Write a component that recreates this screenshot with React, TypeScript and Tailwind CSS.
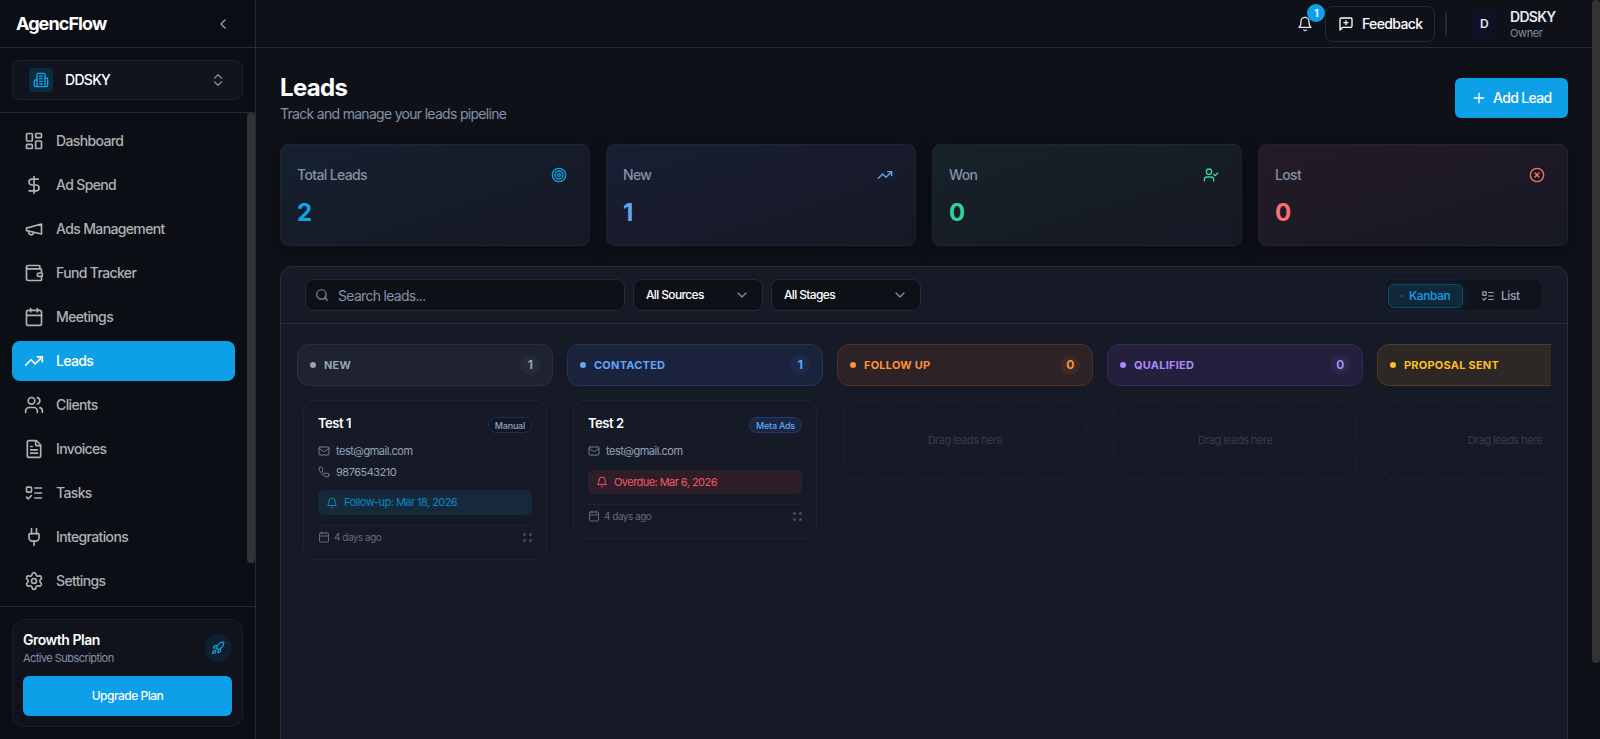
import type { ReactNode } from "react";
import clsx from "clsx";
import {
  Calendar, ChevronDown, ChevronLeft, ChevronsUpDown, CircleX, DollarSign, FileText, LayoutDashboard,
  Mail, Plug, Plus, Rocket, Search, Settings, Target, TrendingUp, UserCheck, Users, Wallet,
} from "lucide-react";

type IconProps = { size?: number; className?: string };

function Svg({ size = 24, className, children }: IconProps & { children: ReactNode }) {
  return (
    <svg width={size} height={size} viewBox="0 0 24 24" fill="none" stroke="currentColor" strokeWidth="2" strokeLinecap="round" strokeLinejoin="round" className={clsx("shrink-0", className)}>
      {children}
    </svg>
  );
}

const Megaphone = (props: IconProps) => (
  <Svg {...props}>
    <path d="m3 11 18-5v12L3 14v-3z" />
    <path d="M11.6 16.8a3 3 0 1 1-5.8-1.6" />
  </Svg>
);

const ListTodo = (props: IconProps) => (
  <Svg {...props}>
    <rect x="3" y="5" width="6" height="6" rx="1" />
    <path d="m3 17 2 2 4-4" />
    <path d="M13 6h8M13 12h8M13 18h8" />
  </Svg>
);

const Bell = (props: IconProps) => (
  <Svg {...props}>
    <path d="M6 8a6 6 0 0 1 12 0c0 7 3 9 3 9H3s3-2 3-9" />
    <path d="M10.3 21a1.94 1.94 0 0 0 3.4 0" />
  </Svg>
);

const Building = (props: IconProps) => (
  <Svg {...props}>
    <path d="M6 22V4a2 2 0 0 1 2-2h8a2 2 0 0 1 2 2v18Z" />
    <path d="M6 12H4a2 2 0 0 0-2 2v6a2 2 0 0 0 2 2h2" />
    <path d="M18 9h2a2 2 0 0 1 2 2v9a2 2 0 0 1-2 2h-2" />
    <path d="M10 6h4M10 10h4M10 14h4M10 18h4" />
  </Svg>
);

const MessagePlus = (props: IconProps) => (
  <Svg {...props}>
    <path d="M21 15a2 2 0 0 1-2 2H7l-4 4V5a2 2 0 0 1 2-2h14a2 2 0 0 1 2 2z" />
    <path d="M12 7v6M9 10h6" />
  </Svg>
);

const Phone = (props: IconProps) => (
  <Svg {...props}>
    <path d="M22 16.92v3a2 2 0 0 1-2.18 2 19.79 19.79 0 0 1-8.63-3.07 19.5 19.5 0 0 1-6-6 19.79 19.79 0 0 1-3.07-8.67A2 2 0 0 1 4.11 2h3a2 2 0 0 1 2 1.72 12.84 12.84 0 0 0 .7 2.81 2 2 0 0 1-.45 2.11L8.09 9.91a16 16 0 0 0 6 6l1.27-1.27a2 2 0 0 1 2.11-.45 12.84 12.84 0 0 0 2.81.7A2 2 0 0 1 22 16.92z" />
  </Svg>
);

const navItems = [
  { label: "Dashboard", icon: LayoutDashboard },
  { label: "Ad Spend", icon: DollarSign },
  { label: "Ads Management", icon: Megaphone },
  { label: "Fund Tracker", icon: Wallet },
  { label: "Meetings", icon: Calendar },
  { label: "Leads", icon: TrendingUp, active: true },
  { label: "Clients", icon: Users },
  { label: "Invoices", icon: FileText },
  { label: "Tasks", icon: ListTodo },
  { label: "Integrations", icon: Plug },
  { label: "Settings", icon: Settings },
];

const stats = [
  { label: "Total Leads", value: 2, icon: Target, color: "text-[#0ea5e9]", bg: "from-[#15202f]" },
  { label: "New", value: 1, icon: TrendingUp, color: "text-[#60a5fa]", bg: "from-[#181e33]" },
  { label: "Won", value: 0, icon: UserCheck, color: "text-[#34d399]", bg: "from-[#16222a]" },
  { label: "Lost", value: 0, icon: CircleX, color: "text-[#f87171]", bg: "from-[#241b27]" },
];

type Lead = { name: string; source: string; badge: string; email: string; phone?: string; due: string; dueClass: string };

const columns: { title: string; count?: number; head: string; dot: string; pill?: string; lead?: Lead }[] = [
  {
    title: "NEW", count: 1, head: "bg-[#1e232f] border-[#2b303d] text-[#94a3b8]", dot: "bg-[#94a3b8]", pill: "bg-[#252a37]",
    lead: { name: "Test 1", source: "Manual", badge: "bg-[#0f172a] border-[#232e3f] text-[#94a3b8]", email: "test@gmail.com", phone: "9876543210", due: "Follow-up: Mar 18, 2026", dueClass: "mt-2.5 h-[25px] bg-[#15293b] text-[#0d86c2]" },
  },
  {
    title: "CONTACTED", count: 1, head: "bg-[#1a233b] border-[#1e3660] text-[#60a5fa]", dot: "bg-[#60a5fa]", pill: "bg-[#1c2b4c]",
    lead: { name: "Test 2", source: "Meta Ads", badge: "bg-[#1a2540] border-[#1f3a6b] text-[#60a5fa]", email: "test@gmail.com", due: "Overdue: Mar 6, 2026", dueClass: "mt-[11px] h-6 bg-[#2d1e29] text-[#f8565b]" },
  },
  { title: "FOLLOW UP", count: 0, head: "bg-[#2d2226] border-[#553022] text-[#fb923c]", dot: "bg-[#fb923c]", pill: "bg-[#3d2926]" },
  { title: "QUALIFIED", count: 0, head: "bg-[#241f3c] border-[#38295f] text-[#a78bfa]", dot: "bg-[#a78bfa]", pill: "bg-[#2d254c]" },
  { title: "PROPOSAL SENT", head: "bg-[#2d2725] border-[#553c1c] text-[#fbbf24]", dot: "bg-[#fbbf24]" },
];

function Sidebar() {
  return (
    <aside className="flex w-64 shrink-0 flex-col border-r border-[#222c3b] bg-[#0b0e14]">
      <div className="flex h-12 shrink-0 items-center justify-between border-b border-[#222c3b] pl-4 pr-6">
        <span className="text-lg font-bold tracking-[-0.05em] text-white">AgencFlow</span>
        <ChevronLeft size={16} className="text-[#94a3b8]" />
      </div>
      <div className="shrink-0 border-b border-[#222c3b] p-3">
        <div className="flex h-10 items-center rounded-lg border border-[#1c1f2e] bg-[#11131d] px-4">
          <div className="flex size-6 items-center justify-center rounded bg-[#0d2c40] text-[#0ea5e9]">
            <Building size={16} />
          </div>
          <span className="ml-3 flex-1 text-sm font-medium tracking-[-0.05em] text-white">DDSKY</span>
          <ChevronsUpDown size={16} className="text-[#8a8d94]" />
        </div>
      </div>
      <div className="flex min-h-0 flex-1">
        <nav className="flex flex-1 flex-col gap-1 px-3 py-2">
          {navItems.map(({ label, icon: Icon, active }) => (
            <a key={label} className={clsx("flex h-10 shrink-0 items-center gap-3 rounded-lg px-3 text-sm font-medium", active ? "bg-[#0ea0e6] text-white" : "text-[#b0b2b5]")}>
              <Icon size={20} />
              {label}
            </a>
          ))}
        </nav>
        <div className="w-2 shrink-0">
          <div className="h-[450px] rounded-full bg-[#333333]" />
        </div>
      </div>
      <div className="shrink-0 border-t border-[#222c3b] p-3">
        <div className="flex h-[108px] flex-col justify-between rounded-xl border border-[#1a1d2a] bg-[#10131b] p-2.5">
          <div className="flex items-center justify-between">
            <div>
              <p className="text-sm font-semibold leading-5 tracking-[-0.035em] text-white">Growth Plan</p>
              <p className="text-[11px] leading-4 tracking-[-0.05em] text-[#8391a7]">Active Subscription</p>
            </div>
            <div className="flex size-7 items-center justify-center rounded-full bg-[#0e1f2e] text-[#0ea5e9]">
              <Rocket size={14} />
            </div>
          </div>
          <button className="h-10 rounded-md bg-[#0ea0e6] text-xs font-medium tracking-[-0.042em] text-white">Upgrade Plan</button>
        </div>
      </div>
    </aside>
  );
}

function Header() {
  return (
    <header className="flex h-12 shrink-0 items-center justify-end border-b border-[#222a36] bg-[#0e1118] pr-7">
      <div className="relative mr-3">
        <Bell size={16} className="text-[#e5e7eb]" />
        <span className="absolute -top-3 left-2.5 flex size-[18px] items-center justify-center rounded-full bg-[#0ea0e6] pt-px text-[10px] font-bold text-white">1</span>
      </div>
      <button className="flex h-9 w-[110px] items-center gap-2 rounded-lg border border-[#222a36] pl-3 text-sm font-medium text-white">
        <MessagePlus size={16} />
        Feedback
      </button>
      <div className="ml-2.5 h-6 w-0.5 bg-[#222835]" />
      <div className="ml-[23px] flex size-7 items-center justify-center rounded-md bg-[#0e1224] text-xs font-semibold text-[#e5e7eb]">D</div>
      <div className="ml-3 w-[54px] pt-0.5">
        <p className="text-sm font-semibold leading-4 tracking-[-0.05em] text-[#e8eaed]">DDSKY</p>
        <p className="text-[11px] leading-4 tracking-[-0.035em] text-[#7f8ca1]">Owner</p>
      </div>
    </header>
  );
}

function LeadCard({ lead }: { lead: Lead }) {
  return (
    <div className="mx-1.5 rounded-xl border border-[#1f2331] px-3.5 pt-3.5 pb-3.5">
      <div className="flex h-7 items-start justify-between">
        <h3 className="text-[13px] font-semibold leading-4 tracking-[-0.035em] text-white">{lead.name}</h3>
        <span className={clsx("mt-0.5 flex h-4 items-center rounded-full border px-1.5 pt-px text-[9px] font-medium tracking-[-0.025em]", lead.badge)}>{lead.source}</span>
      </div>
      <div className="flex flex-col gap-[5px] text-[11px] leading-4 tracking-[-0.045em] text-[#94a3b8]">
        <div className="flex items-center gap-1.5"><Mail size={12} className="text-[#717d90]" />{lead.email}</div>
        {lead.phone && <div className="flex items-center gap-1.5"><Phone size={12} className="text-[#717d90]" />{lead.phone}</div>}
      </div>
      <div className={clsx("flex items-center gap-1.5 rounded-md px-2 text-[11px] tracking-[-0.05em]", lead.dueClass)}>
        <Bell size={12} />
        {lead.due}
      </div>
      <div className="mt-2.5 flex items-center justify-between border-t border-[#1f2431] pt-[3px] text-[10px] leading-4 tracking-[-0.05em] text-[#606b7d]">
        <span className="flex items-center gap-1"><Calendar size={12} />4 days ago</span>
        <span className="grid grid-cols-2 gap-[3px]">
          {[0, 1, 2, 3].map((i) => <i key={i} className="size-[3px] rounded-full bg-[#454c5a]" />)}
        </span>
      </div>
    </div>
  );
}

export default function App() {
  return (
    <div className="flex h-[739px] overflow-hidden bg-[#0e1118] font-['Inter',sans-serif] tracking-[-0.04em]">
      <Sidebar />
      <div className="flex min-w-0 flex-1 flex-col">
        <Header />
        <main className="flex min-h-0 flex-1 flex-col px-6 pt-6">
          <div className="flex h-[72px] shrink-0 items-start justify-between">
            <div>
              <h1 className="text-2xl font-bold leading-8 text-white">Leads</h1>
              <p className="text-sm leading-5 tracking-[-0.05em] text-[#8492a8]">Track and manage your leads pipeline</p>
            </div>
            <button className="mt-1.5 flex h-10 w-[113px] items-center gap-1.5 rounded-md bg-[#0ea0e6] pl-4 text-sm font-medium text-white">
              <Plus size={16} />
              Add Lead
            </button>
          </div>

          <div className="grid shrink-0 grid-cols-4 gap-4">
            {stats.map(({ label, value, icon: Icon, color, bg }) => (
              <div key={label} className={clsx("h-[102px] rounded-lg border border-[#20242f] bg-linear-to-br to-[#161824] px-4 pt-5 shadow-[0_4px_20px_rgba(0,0,0,0.35)]", bg)}>
                <div className="flex items-center justify-between pr-1.5">
                  <span className="text-sm font-medium leading-5 text-[#8391a6]">{label}</span>
                  <Icon size={16} className={color} />
                </div>
                <p className={clsx("mt-3 text-2xl font-bold leading-8", color)}>{value}</p>
              </div>
            ))}
          </div>

          <section className="mt-5 h-[600px] shrink-0 rounded-t-xl border border-[#262c38] bg-[#161926]">
            <div className="flex h-[57px] items-center gap-2 border-b border-[#262e3b] px-6">
              <div className="flex h-8 w-80 items-center gap-[9px] rounded-lg border border-[#232a36] bg-[#0d1017] pl-[9px] text-sm tracking-[-0.05em] text-[#8492a8]">
                <Search size={14} />
                <span className="pt-0.5">Search leads...</span>
              </div>
              <button className="flex h-8 w-[130px] items-center justify-between rounded-lg border border-[#232a36] bg-[#0d1017] px-3 text-xs font-medium text-white">
                All Sources
                <ChevronDown size={16} className="text-[#888b92]" />
              </button>
              <button className="flex h-8 w-[150px] items-center justify-between rounded-lg border border-[#232a36] bg-[#0d1017] px-3 text-xs font-medium text-white">
                All Stages
                <ChevronDown size={16} className="text-[#888b92]" />
              </button>
              <div className="ml-auto flex h-8 w-[159px] items-center rounded-lg border border-[#1a1d26] bg-[#10131b] px-[3px] pt-0.5 text-xs font-medium tracking-[-0.035em]">
                <button className="flex h-6 w-[75px] items-center rounded-md border border-[#0f4a69] bg-[#10283a] pl-3 text-[#0ea0e6] shadow-[0_0_10px_rgba(14,165,233,0.15)]">
                  <i className="mr-1.5 size-0.5 rounded-full bg-[#0c6b99]" />
                  Kanban
                </button>
                <button className="flex h-6 flex-1 items-center gap-1.5 pl-[18px] text-[#94a3b8]">
                  <ListTodo size={14} />
                  List
                </button>
              </div>
            </div>

            <div className="mx-4 mt-5 flex gap-3.5 overflow-hidden">
              {columns.map((col) => (
                <div key={col.title} className="w-64 shrink-0">
                  <div className={clsx("mb-3.5 flex h-[42px] items-center rounded-xl border px-3", col.head)}>
                    <i className={clsx("mr-2 size-1.5 rounded-full", col.dot)} />
                    <span className="flex-1 text-[11px] font-bold tracking-[0.02em]">{col.title}</span>
                    {col.count !== undefined && (
                      <span className={clsx("flex size-5 items-center justify-center rounded-full text-xs font-bold", col.pill)}>{col.count}</span>
                    )}
                  </div>
                  {col.lead ? (
                    <LeadCard lead={col.lead} />
                  ) : (
                    <div className="mx-1.5 flex h-20 items-center justify-center rounded-xl border-2 border-dashed border-[#1b1f2c] text-[11px] tracking-[-0.047em] text-[#353c4a]">
                      Drag leads here
                    </div>
                  )}
                </div>
              ))}
            </div>
          </section>
        </main>
      </div>
      <div className="w-2 shrink-0 bg-[#0d1017]">
        <div className="h-[663px] rounded-full bg-[#333333]" />
      </div>
    </div>
  );
}
